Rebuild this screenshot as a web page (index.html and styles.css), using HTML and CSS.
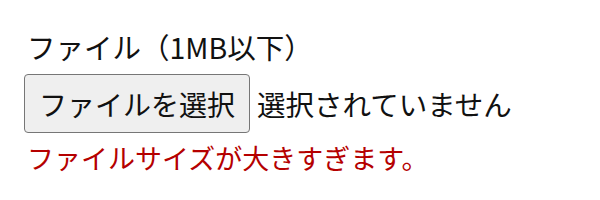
FILE: index.html
```html
<!DOCTYPE html>
<html lang="ja">
<head>
    <meta charset="UTF-8">
    <title>ファイル</title>
    <link rel="stylesheet" href="styles.css">
</head>
<body>
    <div class="field">
        <label class="field-label" for="upload">ファイル（1MB以下）</label>
        <div class="file-row">
            <button type="button" class="file-btn" id="upload">ファイルを選択</button>
            <span class="file-name">選択されていません</span>
        </div>
        <p class="field-error">ファイルサイズが大きすぎます。</p>
    </div>
</body>
</html>
```

FILE: styles.css
```css
body {
    margin: 0;
    padding: 24px;
    background: #fff;
    font-family: "Noto Sans CJK JP", "Noto Sans", sans-serif;
    font-size: 28px;
    color: #111;
}

.field {
    display: flex;
    flex-direction: column;
    align-items: flex-start;
}

.field-label {
    display: block;
    font-size: 28.5px;
    line-height: 46px;
    padding-left: 3px;
}

.file-row {
    display: flex;
    align-items: center;
    gap: 7px;
    margin-top: 4px;
}

.file-btn {
    font: inherit;
    color: #111;
    background: #efefef;
    border: 1px solid #767676;
    border-radius: 4px;
    height: 59px;
    width: 226px;
    padding: 0;
}

.file-name {
    font-size: 28.5px;
}

.field-error {
    margin: 7px 0 0 3px;
    font-size: 27px;
    color: #b50000;
    line-height: 36px;
}
```
